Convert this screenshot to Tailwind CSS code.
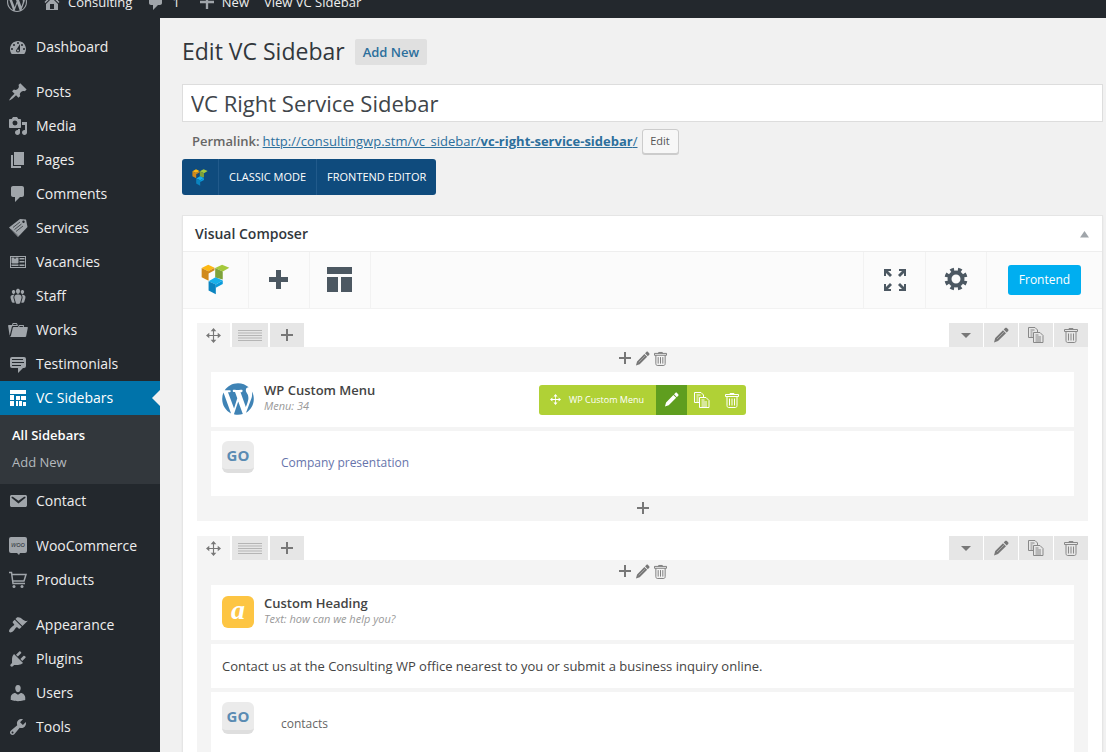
<!DOCTYPE html>
<html lang="en">
<head>
    <meta charset="UTF-8">
    <meta name="viewport" content="width=device-width, initial-scale=1.0">
    <title>Edit VC Sidebar</title>
    <script src="https://cdn.jsdelivr.net/npm/@tailwindcss/browser@4"></script>
</head>
<body class="h-screen overflow-hidden flex flex-col bg-[#f1f1f1] text-[#444] text-[13px] font-['Open_Sans',sans-serif]">

    <!-- Icon sprite -->
    <svg class="hidden">
        <symbol id="i-wp" viewBox="0 0 20 20"><path d="M20 10c0-5.51-4.49-10-10-10C4.48 0 0 4.49 0 10c0 5.52 4.48 10 10 10 5.51 0 10-4.48 10-10zM7.78 15.37L4.37 6.22c.55-.02 1.17-.08 1.17-.08.5-.06.44-1.13-.06-1.11 0 0-1.45.11-2.37.11-.18 0-.37 0-.58-.01C4.12 2.69 6.87 1.11 10 1.11c2.33 0 4.45.87 6.05 2.34-.68-.11-1.65.39-1.65 1.58 0 .74.45 1.36.9 2.1.35.61.55 1.36.55 2.46 0 1.49-1.4 5-1.4 5l-3.03-8.37c.54-.02.82-.17.82-.17.5-.05.44-1.25-.06-1.22 0 0-1.44.12-2.38.12-.87 0-2.33-.12-2.33-.12-.5-.03-.56 1.2-.06 1.22l.92.08 1.26 3.41zM17.41 10c.24-.64.74-1.87.43-4.25.7 1.29 1.05 2.71 1.05 4.25 0 3.29-1.73 6.24-4.4 7.78.97-2.59 1.94-5.2 2.92-7.78zM6.1 18.09C3.12 16.65 1.11 13.53 1.11 10c0-1.3.23-2.48.72-3.59C3.25 10.3 4.67 14.2 6.1 18.09zm4.03-6.63l2.58 6.98c-.86.29-1.76.45-2.71.45-.79 0-1.57-.11-2.29-.33.81-2.38 1.62-4.74 2.42-7.1z"/></symbol>
        <symbol id="i-home" viewBox="0 0 20 20"><path d="M16 8.5l1.53 1.53-1.06 1.06L10 4.6l-6.47 6.49-1.06-1.06L10 2.5l4 4v-2h2v4zm-6-2.46l6 5.99V18H4v-5.97zM12 17v-5H8v5h4z"/></symbol>
        <symbol id="i-comment" viewBox="0 0 20 20"><path d="M5 2h9c1.1 0 2 .9 2 2v7c0 1.1-.9 2-2 2h-2l-5 5v-5H5c-1.1 0-2-.9-2-2V4c0-1.1.9-2 2-2z"/></symbol>
        <symbol id="i-dashboard" viewBox="0 0 20 20"><path fill-rule="evenodd" d="M3.76 17h12.48c1.1-1.37 1.76-3.11 1.76-5 0-4.42-3.58-8-8-8s-8 3.58-8 8c0 1.89.66 3.63 1.76 5zM10 5a1 1 0 0 1 0 2 1 1 0 0 1 0-2zM6 7a1 1 0 0 1 0 2 1 1 0 0 1 0-2zM14 7a1 1 0 0 1 0 2 1 1 0 0 1 0-2zM4 11a1 1 0 0 1 0 2 1 1 0 0 1 0-2zM16 11a1 1 0 0 1 0 2 1 1 0 0 1 0-2zM8.6 12.6L12 7v6.5c0 1.1-.9 2-2 2s-2-.9-2-2c0-.37.24-.68.6-.9zM10 12.5a1 1 0 0 0 0 2 1 1 0 0 0 0-2z"/></symbol>
        <symbol id="i-pin" viewBox="0 0 20 20"><path d="M10.44 3.02l1.82-1.82 6.36 6.35-1.83 1.82c-1.05-.68-2.48-.57-3.41.36l-.75.75c-.92.93-1.04 2.35-.35 3.41l-1.83 1.82-2.41-2.41-2.8 2.79c-.42.42-3.38 2.71-3.8 2.29s1.86-3.39 2.28-3.81l2.79-2.79L4.1 9.36l1.83-1.82c1.05.69 2.48.57 3.4-.36l.75-.75c.93-.92 1.05-2.35.36-3.41z"/></symbol>
        <symbol id="i-media" viewBox="0 0 20 20"><path fill-rule="evenodd" d="M13 11V4c0-.55-.45-1-1-1h-1.67L9 1H5L3.67 3H2c-.55 0-1 .45-1 1v7c0 .55.45 1 1 1h10c.55 0 1-.45 1-1zM7 4.5a2.5 2.5 0 0 1 0 5 2.5 2.5 0 0 1 0-5zM14 6h5v10.5c0 1.38-1.12 2.5-2.5 2.5S14 17.88 14 16.5s1.12-2.5 2.5-2.5c.17 0 .34.02.5.05V9h-3V6zm-4 8.05V13h2v3.5c0 1.38-1.12 2.5-2.5 2.5S7 17.88 7 16.5 8.12 14 9.5 14c.17 0 .34.02.5.05z"/></symbol>
        <symbol id="i-page" viewBox="0 0 20 20"><path d="M6 15V2h10v13H6zm-1 1h8v2H3V5h2v11z"/></symbol>
        <symbol id="i-services" viewBox="0 0 20 20"><path d="M1 9.5L12 1l6 .5L19.500 9 10 19z"/><path d="M5 9.500L12 4M6.500 11.500L13.500 6M8 13.500L15 8" fill="none" stroke="#23282d" stroke-width=".7"/><path d="M3 11.500L10.500 18" fill="none" stroke="#23282d" stroke-width=".4"/><circle cx="15.500" cy="3.800" r="1.200" fill="#23282d"/></symbol>
        <symbol id="i-id" viewBox="0 0 20 20"><path fill-rule="evenodd" d="M2 4h16v12H2zM3 5v10h14V5z"/><path d="M3.500 5.500h3V7h1V5.500h3V11l-1 .5h-5l-1-.5zM3.500 12.500h7V14h-7zM11.500 6H16.500v1.500h-5zM11.500 9H16.500v1.500h-5zM11.500 12.500H16.500V14h-5z"/></symbol>
        <symbol id="i-groups" viewBox="0 0 20 20"><path d="M8.03 4.46c-.29 1.28.55 3.46 1.97 3.46 1.41 0 2.25-2.18 1.96-3.46-.22-.98-1.08-1.63-1.96-1.63-.89 0-1.74.65-1.97 1.63zm-4.13.9c-.25 1.08.47 2.93 1.67 2.93s1.92-1.85 1.67-2.93c-.19-.83-.92-1.39-1.67-1.39s-1.48.56-1.67 1.39zm8.86 0c-.25 1.08.47 2.93 1.66 2.93 1.2 0 1.92-1.85 1.67-2.93-.19-.83-.92-1.39-1.67-1.39-.74 0-1.47.56-1.66 1.39zm-.59 11.43l1.25-4.3C14.2 10 12.71 8.47 10 8.47c-2.72 0-4.21 1.53-3.44 4.02l1.26 4.3C8.05 17.51 9 18 10 18c.98 0 1.94-.49 2.17-1.21zm-6.1-7.63c-.49.67-.96 1.83-.42 3.59l1.12 3.79c-.34.2-.77.31-1.2.31-.85 0-1.65-.41-1.85-1.03l-1.07-3.65c-.65-2.11.61-3.4 2.92-3.4.27 0 .54.02.79.06-.1.1-.2.22-.29.33zm8.35-.39c2.31 0 3.58 1.29 2.92 3.4l-1.07 3.65c-.2.62-1 1.03-1.85 1.03-.43 0-.86-.11-1.2-.31l1.11-3.77c.55-1.78.08-2.94-.42-3.61-.08-.11-.18-.23-.28-.33.25-.04.51-.06.79-.06z"/></symbol>
        <symbol id="i-folder" viewBox="0 0 20 20"><path d="M4 5H.78c-.37 0-.74.32-.69.84l1.56 9.99S3.5 8.47 3.86 6.7c.11-.53.61-.7.98-.7H10s-.7-2.08-.77-2.31C9.11 3.25 8.89 3 8.45 3H5.14c-.36 0-.7.23-.8.64C4.25 4.04 4 5 4 5zm4.88 0h-4s.42-1 .87-1h2.13c.48 0 1 1 1 1zM2.67 16.25c-.31.47-.76.75-1.26.75h15.73c.54 0 .92-.31 1.03-.83.44-2.19 1.68-8.44 1.68-8.44.07-.5-.3-.73-.62-.73H16V5.53c0-.16-.26-.53-.66-.53h-3.76c-.52 0-.87.58-.87.58L10 7H5.59c-.32 0-.63.19-.69.5 0 0-1.59 6.7-1.72 7.33-.07.37-.22.99-.51 1.42zM15.38 7H11s.58-1 1.13-1h2.29c.71 0 .96 1 .96 1z"/></symbol>
        <symbol id="i-testimonial" viewBox="0 0 20 20"><path fill-rule="evenodd" d="M4 3h12a2 2 0 0 1 2 2v7a2 2 0 0 1-2 2h-1l-5 5v-5H4a2 2 0 0 1-2-2V5a2 2 0 0 1 2-2zm11 2H4v1h11V5zm1 3H4v1h12V8zm-3 3H4v1h9v-1z"/></symbol>
        <symbol id="i-grid" viewBox="0 0 20 20"><path d="M2 2h16v4H2zM2 7h4v5H2zM2 13h4v5H2zM8 8h4v4H8zM8 13h2v5H8zM11 13h3v5h-3zM13 8h5v4h-5zM15 14h3v4h-3z"/></symbol>
        <symbol id="i-mail" viewBox="0 0 20 20"><path d="M3.87 4h13.25C18.37 4 19 4.59 19 5.79v8.42c0 1.19-.63 1.79-1.88 1.79H3.87c-1.25 0-1.88-.6-1.88-1.79V5.79c0-1.2.63-1.79 1.88-1.79zm6.62 8.6l6.74-5.53c.24-.2.43-.66.13-1.07-.29-.41-.82-.42-1.17-.17l-5.7 3.86L4.8 5.83c-.35-.25-.88-.24-1.17.17-.3.41-.11.87.13 1.07z"/></symbol>
        <symbol id="i-cart" viewBox="0 0 20 20"><path fill="none" stroke="currentColor" stroke-width="1.5" d="M1 2.500h2.500L5 13.500h12M4 4.500h14l-2 6.500H5"/><circle cx="6" cy="16.500" r="1.500"/><circle cx="14" cy="16.500" r="1.500"/></symbol>
        <symbol id="i-brush" viewBox="0 0 20 20"><path d="M14.48 11.06L7.41 3.99l1.5-1.5c.5-.56 2.3-.47 3.51.32 1.21.8 1.43 1.28 2.91 2.1 1.18.64 2.45 1.26 4.45.85zm-.71.71L6.7 4.7 4.93 6.47c-.39.39-.39 1.02 0 1.41l1.06 1.06c.39.39.39 1.03 0 1.42-.6.6-1.43 1.11-2.21 1.69-.35.26-.7.53-1.01.84C1.43 14.23.4 16.08 1.4 17.07c.99 1 2.84-.03 4.18-1.36.31-.31.58-.66.85-1.02.57-.78 1.08-1.61 1.69-2.21.39-.39 1.02-.39 1.41 0l1.06 1.06c.39.39 1.02.39 1.41 0z"/></symbol>
        <symbol id="i-plug" viewBox="0 0 20 20"><path d="M13.11 4.36L9.87 7.6 8 5.73l3.24-3.24c.35-.34 1.05-.2 1.56.32.52.51.66 1.21.31 1.55zm-8 1.77l.91-1.12 9.01 9.01-1.19.84c-.71.71-2.63 1.16-3.82 1.16H6.14L4.9 17.26c-.59.59-1.54.59-2.12 0-.59-.58-.59-1.53 0-2.12l1.24-1.24v-3.88c0-1.13.4-3.19 1.09-3.89zm7.26 3.97l3.24-3.24c.34-.35 1.04-.21 1.55.31.52.51.66 1.21.31 1.55l-3.24 3.25z"/></symbol>
        <symbol id="i-user" viewBox="0 0 20 20"><path d="M10 9.25c-2.27 0-2.73-3.44-2.73-3.44C7 4.02 7.82 2 9.97 2c2.16 0 2.98 2.02 2.71 3.81 0 0-.41 3.44-2.68 3.44zm0 2.57L12.72 10c2.39 0 4.52 2.33 4.52 4.53v2.49s-3.65 1.13-7.24 1.13c-3.65 0-7.24-1.13-7.24-1.13v-2.49c0-2.25 1.94-4.48 4.47-4.48z"/></symbol>
        <symbol id="i-tool" viewBox="0 0 20 20"><path d="M16.68 9.77c-1.34 1.34-3.3 1.67-4.95.99l-5.41 6.52c-.99.99-2.59.99-3.58 0s-.99-2.59 0-3.57l6.52-5.42c-.68-1.65-.35-3.61.99-4.95 1.28-1.28 3.12-1.62 4.72-1.06l-2.89 2.89 2.82 2.82 2.86-2.87c.53 1.58.18 3.39-1.08 4.65zM3.81 16.21c.4.39 1.04.39 1.43 0 .4-.4.4-1.04 0-1.43-.39-.4-1.03-.4-1.43 0-.39.39-.39 1.03 0 1.43z"/></symbol>
        <symbol id="i-vc" viewBox="0 0 88 94">
            <path fill="#fdb813" d="M2 12L22 2l19 9-19 11z"/>
            <path fill="#d0891c" d="M2 12l20 10 19-11v8L23 29v22L2 40z"/>
            <path fill="#a5c93c" d="M43 12L64 2l22 9-20 12z"/>
            <path fill="#7ea23a" d="M43 12l23 11v24L43 41z"/>
            <path fill="#17b0ea" d="M23 52l21-12 22 10-21 12z"/>
            <path fill="#0a84c0" d="M23 52l22 10v30L23 80z"/>
            <path fill="#0a9bdb" d="M66 50L45 62v10l21-11z"/>
        </symbol>
        <symbol id="i-plus" viewBox="0 0 12 12"><path d="M5 0h2v5h5v2H7v5H5V7H0V5h5z"/></symbol>
        <symbol id="i-move" viewBox="0 0 16 16"><path d="M8 0l3 3.5H8.6v3.9h3.9V5L16 8l-3.5 3V8.6H8.6v3.9H11L8 16l-3-3.5h2.4V8.6H3.5V11L0 8l3.5-3v2.4h3.9V3.5H5z"/></symbol>
        <symbol id="i-pencil" viewBox="0 0 16 16"><path d="M10.700 2.500l1.400-1.400c.7-.6 1.200-.6 1.800 0l1.200 1.200c.6.6.6 1.100 0 1.800l-1.400 1.400zM10 3.200l3 3-8 7.900-4 1.400 1.200-4.400z"/><path d="M4 12l6.800-6.800" stroke="#fff" stroke-opacity=".5" stroke-width=".7"/></symbol>
        <symbol id="i-trash" viewBox="0 0 14 16"><path fill="none" stroke="currentColor" d="M5 2.5v-1h4v1M.5 4.500v-2h13v2zM2 4.500v9c0 1 .5 2 1.500 2h7c1 0 1.500-1 1.500-2v-9M4.500 6.500v7M7 6.500v7M9.500 6.500v7"/></symbol>
        <symbol id="i-copy" viewBox="0 0 16 16"><path fill="none" stroke="currentColor" d="M5.500 10.500H.5V.5H7L9.500 3v2M5.500 5.500h6.500l3 3v7H5.500zM2.500 3h4M2.500 5h2M2.500 7h2M2.500 9h2M7.500 8h3M7.500 10h5.500M7.500 12h5.500M7.500 14h5.500"/></symbol>
        <symbol id="i-lines" viewBox="0 0 24 11"><path fill="none" stroke="currentColor" d="M0 .5h24M0 3h24M0 5.500h24M0 8h24M0 10.500h24"/></symbol>
    </svg>

    <!-- Admin bar -->
    <header class="h-[18px] shrink-0 overflow-hidden flex items-end bg-[#23282d] text-[#eee]">
        <nav class="h-8 shrink-0 flex items-center pl-[7px]">
            <a href="#"><svg class="size-5 fill-[#a0a5aa]"><use href="#i-wp"/></svg></a>
            <a href="#" class="flex items-center gap-[6px] ml-[15px]"><svg class="size-5 fill-[#a0a5aa]"><use href="#i-home"/></svg><span class="pt-[2px]">Consulting</span></a>
            <a href="#" class="flex items-center gap-[6px] ml-[14px]"><svg class="size-5 fill-[#a0a5aa]"><use href="#i-comment"/></svg><span class="pt-[2px]">1</span></a>
            <a href="#" class="flex items-center gap-2 ml-5"><svg class="size-[14px] fill-[#a0a5aa]"><use href="#i-plus"/></svg><span class="pt-[2px]">New</span></a>
            <a href="#" class="ml-[15px] pt-[2px]">View VC Sidebar</a>
        </nav>
    </header>

    <div class="flex flex-1 min-h-0">
        <!-- Admin menu -->
        <aside class="w-40 shrink-0 overflow-hidden bg-[#23282d] pt-3 text-sm text-[#eee]">
            <a href="#" class="flex items-center gap-2 h-[34px] px-2"><svg class="size-5 fill-[#a0a5aa]"><use href="#i-dashboard"/></svg>Dashboard</a>
            <nav class="mt-[11px]">
                <a href="#" class="flex items-center gap-2 h-[34px] px-2"><svg class="size-5 fill-[#a0a5aa]"><use href="#i-pin"/></svg>Posts</a>
                <a href="#" class="flex items-center gap-2 h-[34px] px-2"><svg class="size-5 fill-[#a0a5aa]"><use href="#i-media"/></svg>Media</a>
                <a href="#" class="flex items-center gap-2 h-[34px] px-2"><svg class="size-5 fill-[#a0a5aa]"><use href="#i-page"/></svg>Pages</a>
                <a href="#" class="flex items-center gap-2 h-[34px] px-2"><svg class="size-5 fill-[#a0a5aa]"><use href="#i-comment"/></svg>Comments</a>
                <a href="#" class="flex items-center gap-2 h-[34px] px-2"><svg class="size-5 fill-[#a0a5aa]"><use href="#i-services"/></svg>Services</a>
                <a href="#" class="flex items-center gap-2 h-[34px] px-2"><svg class="size-5 fill-[#a0a5aa]"><use href="#i-id"/></svg>Vacancies</a>
                <a href="#" class="flex items-center gap-2 h-[34px] px-2"><svg class="size-5 fill-[#a0a5aa]"><use href="#i-groups"/></svg>Staff</a>
                <a href="#" class="flex items-center gap-2 h-[34px] px-2"><svg class="size-5 fill-[#a0a5aa]"><use href="#i-folder"/></svg>Works</a>
                <a href="#" class="flex items-center gap-2 h-[34px] px-2"><svg class="size-5 fill-[#a0a5aa]"><use href="#i-testimonial"/></svg>Testimonials</a>
                <a href="#" class="flex items-center gap-2 h-[34px] pl-2 bg-[#0073aa] text-white">
                    <svg class="size-5 fill-white"><use href="#i-grid"/></svg>VC Sidebars
                    <svg class="ml-auto w-2 h-4 fill-[#f1f1f1]" viewBox="0 0 8 16"><path d="M8 0v16L0 8z"/></svg>
                </a>
                <div class="bg-[#32373c] pt-[7px] pb-2 text-[13px]">
                    <a href="#" class="flex items-center h-[27px] px-3 font-semibold text-white">All Sidebars</a>
                    <a href="#" class="flex items-center h-[27px] px-3 text-[#b4b9be]">Add New</a>
                </div>
                <a href="#" class="flex items-center gap-2 h-[34px] px-2"><svg class="size-5 fill-[#a0a5aa]"><use href="#i-mail"/></svg>Contact</a>
            </nav>
            <nav class="mt-[11px]">
                <a href="#" class="flex items-center gap-2 h-[34px] px-2">
                    <svg class="size-5 fill-[#a0a5aa]" viewBox="0 0 20 20"><path d="M3 1h14a2 2 0 0 1 2 2v12a2 2 0 0 1-2 2h-5l-1 2-2-2H3a2 2 0 0 1-2-2V3a2 2 0 0 1 2-2z"/><text x="10" y="11" text-anchor="middle" class="fill-[#23282d] text-[6px] italic">WOO</text></svg>WooCommerce
                </a>
                <a href="#" class="flex items-center gap-2 h-[34px] px-2"><svg class="size-5 fill-[#a0a5aa] text-[#a0a5aa]"><use href="#i-cart"/></svg>Products</a>
            </nav>
            <nav class="mt-[11px]">
                <a href="#" class="flex items-center gap-2 h-[34px] px-2"><svg class="size-5 fill-[#a0a5aa]"><use href="#i-brush"/></svg>Appearance</a>
                <a href="#" class="flex items-center gap-2 h-[34px] px-2"><svg class="size-5 fill-[#a0a5aa]"><use href="#i-plug"/></svg>Plugins</a>
                <a href="#" class="flex items-center gap-2 h-[34px] px-2"><svg class="size-5 fill-[#a0a5aa]"><use href="#i-user"/></svg>Users</a>
                <a href="#" class="flex items-center gap-2 h-[34px] px-2"><svg class="size-5 fill-[#a0a5aa]"><use href="#i-tool"/></svg>Tools</a>
            </nav>
        </aside>

        <!-- Content -->
        <main class="flex-1 min-w-0 overflow-hidden pl-[22px] pr-[3px] pt-[18px]">
            <div class="flex items-center gap-[10px] h-8">
                <h1 class="pb-[2px] text-[23px] leading-8 text-[#32373c]">Edit VC Sidebar</h1>
                <a href="#" class="flex items-center h-[26px] px-2 pt-[2px] rounded-xs bg-[#e0e0e0] font-semibold text-[#2c6f9c]">Add New</a>
            </div>
            <input type="text" aria-label="Title" value="VC Right Service Sidebar" class="block w-full h-[38px] mt-4 px-2 border border-[#ddd] bg-white text-[22px] text-[#40454a]">

            <div class="flex items-center h-[25px] mt-[7px] pl-[10px] text-[#666]">
                <strong class="font-semibold mr-[3px]">Permalink:</strong>
                <a href="#" class="underline text-[#2c6f9c]">http://consultingwp.stm/vc_sidebar/<b>vc-right-service-sidebar</b>/</a>
                <button class="h-[25px] w-[37px] ml-1 rounded-[3px] border border-[#ccc] bg-[#f7f7f7] text-[11px] text-[#555] shadow-[0_1px_0_#ccc]">Edit</button>
            </div>

            <div class="flex w-fit h-9 mt-[5px] rounded-[3px] bg-[#0f4b7d] text-[11px] text-white">
                <span class="flex items-center justify-center w-9"><svg class="w-4 h-[17px]"><use href="#i-vc"/></svg></span>
                <button class="px-[10px] border-l border-[#215a8b] font-medium">CLASSIC MODE</button>
                <button class="px-[10px] border-l border-[#215a8b] font-medium">FRONTEND EDITOR</button>
            </div>

            <section class="mt-5 border border-[#e5e5e5] bg-white shadow-xs">
                <div class="flex items-center justify-between h-9 px-[13px] pl-3 border-b border-[#eee]">
                    <h2 class="text-sm font-semibold text-[#32373c]">Visual Composer</h2>
                    <button aria-label="Toggle panel"><svg class="w-[9px] h-2 fill-[#a0a5aa]" viewBox="0 0 9 8"><path d="M4.5 1L9 7.500H0z"/></svg></button>
                </div>

                <!-- Composer toolbar -->
                <div class="flex h-[57px] border-b border-[#f2f2f2] bg-[#fbfbfb]">
                    <span class="flex items-center justify-center w-[66px] pb-[2px] border-r border-[#f2f2f2]"><svg class="w-[29px] h-[31px]"><use href="#i-vc"/></svg></span>
                    <button aria-label="Add element" class="flex items-center justify-center w-[61px] pb-[2px] pr-[2px] border-r border-[#f2f2f2]"><svg class="size-[19px] fill-[#4c5862]" viewBox="0 0 19 19"><path d="M7 0h5v7h7v5h-7v7H7v-7H0V7h7z"/></svg></button>
                    <button aria-label="Templates" class="flex items-center justify-center w-[61px] pb-[2px] pr-[2px] border-r border-[#f2f2f2]"><svg class="size-[25px] fill-[#4c5862]" viewBox="0 0 25 25"><path d="M0 0h25v7H0zM0 10h11v15H0zM14 10h11v15H14z"/></svg></button>
                    <button aria-label="Full screen" class="flex items-center justify-center w-[62px] ml-auto border-l border-[#f2f2f2]">
                        <svg class="size-[22px] fill-[#4c5862]" viewBox="0 0 22 22"><path d="M0 0h7v2H4l4 4-2 2-4-4v3H0zM22 0v7h-2V4l-4 4-2-2 4-4h-3V0zM0 22v-7h2v3l4-4 2 2-4 4h3v2zM22 22h-7v-2h3l-4-4 2-2 4 4v-3h2z"/></svg>
                    </button>
                    <button aria-label="Settings" class="flex items-center justify-center w-[61px] pb-[2px] border-l border-[#f2f2f2]">
                        <svg class="size-6 fill-none stroke-[#4c5862]" viewBox="0 0 24 24"><circle cx="12" cy="12" r="6.5" stroke-width="4"/><circle cx="12" cy="12" r="9.5" stroke-width="4" pathLength="16" stroke-dasharray="1 1" transform="rotate(11.25 12 12)"/></svg>
                    </button>
                    <div class="flex items-center px-[21px] border-l border-[#f2f2f2]">
                        <button class="h-[30px] w-[73px] rounded-[3px] bg-[#00aef0] text-xs text-white">Frontend</button>
                    </div>
                </div>

                <div class="px-[14px] pt-[14px] space-y-[15px]">
                    <!-- Row 1 -->
                    <div>
                        <div class="flex justify-between h-6 text-[#888]">
                            <div class="flex gap-[2px]">
                                <button aria-label="Move row" class="flex items-center justify-center w-[33px] bg-[#f4f4f4]"><svg class="size-[15px] fill-[#777]"><use href="#i-move"/></svg></button>
                                <button aria-label="Row layout" class="flex items-center justify-center w-9 bg-[#e6e6e6] text-[#b5b5b5]"><svg class="w-6 h-[11px]"><use href="#i-lines"/></svg></button>
                                <button aria-label="Add column" class="flex items-center justify-center w-[34px] bg-[#e6e6e6]"><svg class="size-3 fill-[#777]"><use href="#i-plus"/></svg></button>
                            </div>
                            <div class="flex gap-px">
                                <button aria-label="Toggle row" class="flex items-center justify-center w-[34px] bg-[#e6e6e6]"><svg class="w-[10px] h-[5px] fill-[#777]" viewBox="0 0 10 5"><path d="M0 0h10L5 5z"/></svg></button>
                                <button aria-label="Edit row" class="flex items-center justify-center w-[34px] bg-[#e6e6e6]"><svg class="size-4 fill-[#777]"><use href="#i-pencil"/></svg></button>
                                <button aria-label="Clone row" class="flex items-center justify-center w-[34px] bg-[#e6e6e6]"><svg class="size-4"><use href="#i-copy"/></svg></button>
                                <button aria-label="Delete row" class="flex items-center justify-center w-[34px] bg-[#e6e6e6]"><svg class="w-[14px] h-4"><use href="#i-trash"/></svg></button>
                            </div>
                        </div>
                        <div class="bg-[#f4f4f4] px-[14px]">
                            <div class="flex items-center justify-center gap-1 h-[25px] pb-[3px] text-[#777]">
                                <button aria-label="Add to column"><svg class="block size-3 fill-[#777]"><use href="#i-plus"/></svg></button>
                                <button aria-label="Edit column"><svg class="block size-[15px] fill-[#777]"><use href="#i-pencil"/></svg></button>
                                <button aria-label="Delete column"><svg class="block w-[13px] h-[15px]"><use href="#i-trash"/></svg></button>
                            </div>
                            <div class="space-y-1">
                                <div class="relative flex gap-[10px] h-[55px] px-[11px] pt-[10px] bg-white">
                                    <svg class="size-8 mt-px fill-[#3f83b5]" viewBox="1 1 18 18"><path d="M7.78 15.37L4.37 6.22c.55-.02 1.17-.08 1.17-.08.5-.06.44-1.13-.06-1.11 0 0-1.45.11-2.37.11-.18 0-.37 0-.58-.01C4.12 2.69 6.87 1.11 10 1.11c2.33 0 4.45.87 6.05 2.34-.68-.11-1.65.39-1.65 1.58 0 .74.45 1.36.9 2.1.35.61.55 1.36.55 2.46 0 1.49-1.4 5-1.4 5l-3.03-8.37c.54-.02.82-.17.82-.17.5-.05.44-1.25-.06-1.22 0 0-1.44.12-2.38.12-.87 0-2.33-.12-2.33-.12-.5-.03-.56 1.2-.06 1.22l.92.08 1.26 3.41zM17.41 10c.24-.64.74-1.87.43-4.25.7 1.29 1.05 2.71 1.05 4.25 0 3.29-1.73 6.24-4.4 7.78.97-2.59 1.94-5.2 2.92-7.78zM6.1 18.09C3.12 16.65 1.11 13.53 1.11 10c0-1.3.23-2.48.72-3.59C3.25 10.3 4.67 14.2 6.1 18.09zm4.03-6.63l2.58 6.98c-.86.29-1.76.45-2.71.45-.79 0-1.57-.11-2.29-.33.81-2.38 1.62-4.74 2.42-7.1z"/></svg>
                                    <div>
                                        <h3 class="text-[13px] leading-4 font-semibold">WP Custom Menu</h3>
                                        <p class="text-[11px] leading-[15px] italic text-[#999]">Menu: 34</p>
                                    </div>
                                    <!-- Hover controls -->
                                    <div class="absolute inset-0 flex items-center justify-center">
                                        <div class="flex h-[30px] rounded-[3px] overflow-hidden bg-[#b0d136] text-[9px] font-medium text-white">
                                            <button class="flex items-center gap-2 pl-[11px] w-[117px] whitespace-nowrap"><svg class="size-[11px] fill-white"><use href="#i-move"/></svg>WP Custom Menu</button>
                                            <button aria-label="Edit" class="flex items-center justify-center w-[31px] bg-[#5f9e1f]"><svg class="size-[15px] fill-white"><use href="#i-pencil"/></svg></button>
                                            <button aria-label="Clone" class="flex items-center justify-center w-[30px]"><svg class="size-4"><use href="#i-copy"/></svg></button>
                                            <button aria-label="Delete" class="flex items-center justify-center w-[29px]"><svg class="w-[14px] h-4"><use href="#i-trash"/></svg></button>
                                        </div>
                                    </div>
                                </div>
                                <div class="flex gap-[27px] h-[65px] px-[11px] pt-[10px] bg-white">
                                    <span class="flex items-center justify-center size-8 rounded-md bg-[#ebebeb] border-b-4 border-[#dedede] text-[15px] font-bold text-[#5a8bb3]">GO</span>
                                    <p class="pt-[14px] text-xs leading-4 text-[#6674ab]">Company presentation</p>
                                </div>
                            </div>
                            <div class="flex items-center justify-center h-[25px] pb-[2px]">
                                <button aria-label="Append element"><svg class="block size-3 fill-[#777]"><use href="#i-plus"/></svg></button>
                            </div>
                        </div>
                    </div>

                    <!-- Row 2 -->
                    <div>
                        <div class="flex justify-between h-6 text-[#888]">
                            <div class="flex gap-[2px]">
                                <button aria-label="Move row" class="flex items-center justify-center w-[33px] bg-[#f4f4f4]"><svg class="size-[15px] fill-[#777]"><use href="#i-move"/></svg></button>
                                <button aria-label="Row layout" class="flex items-center justify-center w-9 bg-[#e6e6e6] text-[#b5b5b5]"><svg class="w-6 h-[11px]"><use href="#i-lines"/></svg></button>
                                <button aria-label="Add column" class="flex items-center justify-center w-[34px] bg-[#e6e6e6]"><svg class="size-3 fill-[#777]"><use href="#i-plus"/></svg></button>
                            </div>
                            <div class="flex gap-px">
                                <button aria-label="Toggle row" class="flex items-center justify-center w-[34px] bg-[#e6e6e6]"><svg class="w-[10px] h-[5px] fill-[#777]" viewBox="0 0 10 5"><path d="M0 0h10L5 5z"/></svg></button>
                                <button aria-label="Edit row" class="flex items-center justify-center w-[34px] bg-[#e6e6e6]"><svg class="size-4 fill-[#777]"><use href="#i-pencil"/></svg></button>
                                <button aria-label="Clone row" class="flex items-center justify-center w-[34px] bg-[#e6e6e6]"><svg class="size-4"><use href="#i-copy"/></svg></button>
                                <button aria-label="Delete row" class="flex items-center justify-center w-[34px] bg-[#e6e6e6]"><svg class="w-[14px] h-4"><use href="#i-trash"/></svg></button>
                            </div>
                        </div>
                        <div class="bg-[#f4f4f4] px-[14px]">
                            <div class="flex items-center justify-center gap-1 h-[25px] pb-[3px] text-[#777]">
                                <button aria-label="Add to column"><svg class="block size-3 fill-[#777]"><use href="#i-plus"/></svg></button>
                                <button aria-label="Edit column"><svg class="block size-[15px] fill-[#777]"><use href="#i-pencil"/></svg></button>
                                <button aria-label="Delete column"><svg class="block w-[13px] h-[15px]"><use href="#i-trash"/></svg></button>
                            </div>
                            <div class="space-y-1">
                                <div class="flex gap-[10px] h-[55px] px-[11px] pt-[10px] bg-white">
                                    <span class="flex items-center justify-center size-8 mt-px pb-1 rounded-md bg-[#fdc543] font-['Liberation_Serif',serif] text-[28px] leading-8 italic font-bold text-white">a</span>
                                    <div>
                                        <h3 class="text-[13px] leading-4 font-semibold">Custom Heading</h3>
                                        <p class="text-[11px] leading-[15px] italic text-[#999]">Text: how can we help you?</p>
                                    </div>
                                </div>
                                <p class="flex items-center h-11 px-[11px] pt-[2px] bg-white">Contact us at the Consulting WP office nearest to you or submit a business inquiry online.</p>
                                <div class="flex gap-[27px] h-[65px] px-[11px] pt-[10px] bg-white">
                                    <span class="flex items-center justify-center size-8 rounded-md bg-[#ebebeb] border-b-4 border-[#dedede] text-[15px] font-bold text-[#5a8bb3]">GO</span>
                                    <p class="pt-[14px] text-xs leading-4 text-[#666]">contacts</p>
                                </div>
                            </div>
                        </div>
                    </div>
                </div>
            </section>
        </main>
    </div>
</body>
</html>
